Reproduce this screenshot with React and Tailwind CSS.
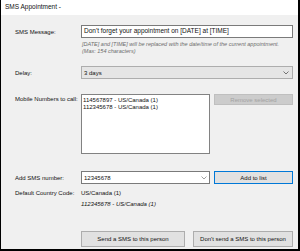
export default function App() {
  const font = { fontFamily: '"Liberation Sans", Arial, sans-serif' };
  return (
    <div
      className="w-[300px] h-[251px] flex flex-col border-l border-r-2 border-b-2 border-black overflow-hidden text-[6px] leading-none text-[#111] whitespace-nowrap"
      style={font}
    >
      <div className="h-[15px] bg-white flex items-center pl-[4px] text-[6.5px] shrink-0">
        SMS Appointment -
      </div>
      <div className="flex-1 bg-[#f0f0f0] pl-[14px] pr-[5px] pt-[10px] flex flex-col">
        {/* SMS message */}
        <div className="flex items-center h-[13px]">
          <div className="w-[66px] shrink-0">SMS Message:</div>
          <div className="flex-1 h-[13px] bg-white border border-[#7a7a7a] flex items-center px-[2px] text-[6.5px]">
            Don't forget your appointment on [DATE] at [TIME]
          </div>
        </div>
        <div className="ml-[66px] pl-[1px] mt-[3px] italic text-[#6d6d6d] text-[5.5px] leading-[7px]">
          <div>[DATE] and [TIME] will be replaced with the date/time of the current appointment.</div>
          <div>(Max: 154 characters)</div>
        </div>
        {/* Delay */}
        <div className="flex items-center h-[13px] mt-[11px]">
          <div className="w-[66px] shrink-0">Delay:</div>
          <div className="flex-1 h-[13px] bg-[#e5e5e5] border border-[#adadad] flex items-center justify-between px-[2px]">
            <span>3 days</span>
            <svg width="6" height="4" viewBox="0 0 6 4" className="mr-[1px]">
              <path d="M0.5 0.5 L3 3 L5.5 0.5" fill="none" stroke="#555" strokeWidth="0.8" />
            </svg>
          </div>
        </div>
        {/* Mobile numbers */}
        <div className="flex mt-[15px]">
          <div className="w-[66px] shrink-0 pt-[2px]">Mobile Numbers to call:</div>
          <div className="w-[129px] h-[60px] bg-white border border-[#828282] px-[1px] pt-[2px] leading-[7px]">
            <div>114567897 - US/Canada (1)</div>
            <div>112345678 - US/Canada (1)</div>
          </div>
          <div className="ml-[4px] flex-1">
            <div className="h-[11px] bg-[#cccccc] border border-[#bfbfbf] flex items-center justify-center text-[#a3a3a3]">
              Remove selected
            </div>
          </div>
        </div>
        {/* Add SMS number */}
        <div className="flex items-center h-[13px] mt-[17px]">
          <div className="w-[66px] shrink-0">Add SMS number:</div>
          <div className="w-[129px] h-[13px] bg-white border border-[#7a7a7a] flex items-center justify-between px-[2px]">
            <span>12345678</span>
            <svg width="6" height="4" viewBox="0 0 6 4">
              <path d="M0.5 0.5 L3 3 L5.5 0.5" fill="none" stroke="#888" strokeWidth="0.8" />
            </svg>
          </div>
          <div className="ml-[4px] flex-1 h-[13px] bg-[#e1e1e1] border border-[#0078d7] flex items-center justify-center">
            Add to list
          </div>
        </div>
        <div className="flex items-center h-[8px] mt-[5px]">
          <div className="w-[66px] shrink-0">Default Country Code:</div>
          <div>US/Canada (1)</div>
        </div>
        <div className="ml-[66px] mt-[4px] italic">112345678 - US/Canada (1)</div>
        {/* Buttons */}
        <div className="flex mt-[24px] ml-[66px] gap-[8px]">
          <div className="w-[104px] h-[16px] bg-[#e1e1e1] border border-[#adadad] flex items-center justify-center">
            Send a SMS to this person
          </div>
          <div className="flex-1 h-[16px] bg-[#e1e1e1] border border-[#adadad] flex items-center justify-center">
            Don't send a SMS to this person
          </div>
        </div>
      </div>
    </div>
  );
}
